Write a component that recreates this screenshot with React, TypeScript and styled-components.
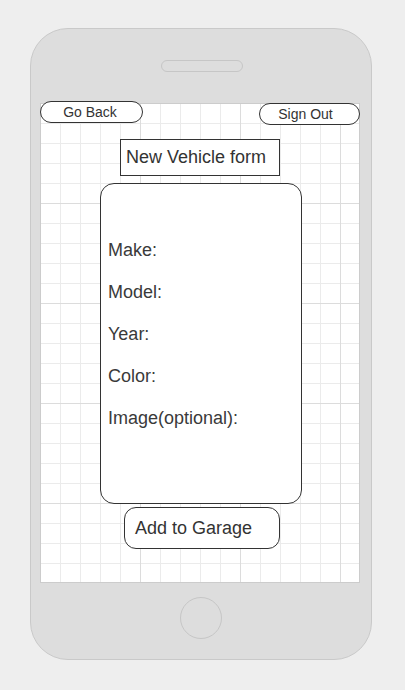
import styled, { createGlobalStyle } from 'styled-components';

const GlobalStyle = createGlobalStyle`
  html, body {
    margin: 0;
    padding: 0;
    background: #eeeeee;
  }
  body {
    min-height: 690px;
    padding: 28px 0 0 30px;
    box-sizing: border-box;
    font-family: "Liberation Sans", Arial, sans-serif;
    color: #333333;
  }
`;

const FIELDS = ['Make:', 'Model:', 'Year:', 'Color:', 'Image(optional):'];

function App() {
  return (
    <>
      <GlobalStyle />
      <Phone>
        <Speaker />
        <Screen>
          <TopBar>
            <PillButton $width={103} $shift={3} $offset={0}>
              Go Back
            </PillButton>
            <PillButton $width={101} $shift={8} $offset={2}>
              Sign Out
            </PillButton>
          </TopBar>
          <Title>New Vehicle form</Title>
          <FormCard>
            {FIELDS.map((label) => (
              <FieldLabel key={label}>{label}</FieldLabel>
            ))}
          </FormCard>
          <SubmitButton>Add to Garage</SubmitButton>
        </Screen>
        <HomeButton />
      </Phone>
    </>
  );
}

const Phone = styled.div`
  display: flex;
  flex-direction: column;
  align-items: center;
  box-sizing: border-box;
  width: 342px;
  height: 632px;
  padding-top: 31px;
  background: #dddddd;
  border: 1px solid #c9c9c9;
  border-radius: 38px;
`;

const Speaker = styled.div`
  width: 82px;
  height: 12px;
  margin-left: 2px;
  box-sizing: border-box;
  border: 1px solid #c6c6c6;
  border-radius: 6px;
`;

const Screen = styled.div`
  display: flex;
  flex-direction: column;
  align-items: center;
  box-sizing: border-box;
  width: 320px;
  height: 480px;
  margin: 31px 2px 0 0;
  border: 1px solid #cccccc;
  background-color: #ffffff;
  background-origin: border-box;
  background-image:
    linear-gradient(to right, #dcdcdc 1px, transparent 1px),
    linear-gradient(to bottom, #dcdcdc 1px, transparent 1px),
    linear-gradient(to right, #ebebeb 1px, transparent 1px),
    linear-gradient(to bottom, #ebebeb 1px, transparent 1px);
  background-size: 100px 100px, 100px 100px, 20px 20px, 20px 20px;
`;

const TopBar = styled.div`
  display: flex;
  justify-content: space-between;
  align-items: flex-start;
  align-self: stretch;
  margin: -3px -1px 0 -1px;
`;

const PillButton = styled.div<{ $width: number; $shift: number; $offset: number }>`
  box-sizing: border-box;
  width: ${({ $width }) => $width}px;
  height: 22px;
  margin-top: ${({ $offset }) => $offset}px;
  padding-right: ${({ $shift }) => $shift}px;
  border: 1px solid #333333;
  border-radius: 11px;
  background: #ffffff;
  font-size: 14px;
  line-height: 20px;
  text-align: center;
`;

const Title = styled.div`
  box-sizing: border-box;
  width: 160px;
  height: 37px;
  margin-top: 14px;
  padding-left: 5px;
  border: 1px solid #333333;
  background: #ffffff;
  font-size: 18px;
  line-height: 35px;
  white-space: nowrap;
`;

const FormCard = styled.div`
  display: flex;
  flex-direction: column;
  box-sizing: border-box;
  width: 202px;
  height: 321px;
  margin: 7px 0 0 2px;
  padding: 45px 0 0 7px;
  border: 1px solid #333333;
  border-radius: 14px;
  background: #ffffff;
`;

const FieldLabel = styled.span`
  font-size: 18px;
  line-height: 42px;
  color: #3a3a3a;
`;

const SubmitButton = styled.div`
  box-sizing: border-box;
  width: 156px;
  height: 42px;
  margin: 3px 0 0 4px;
  padding-left: 10px;
  border: 1px solid #333333;
  border-radius: 12px;
  background: #ffffff;
  font-size: 18px;
  line-height: 40px;
`;

const HomeButton = styled.div`
  width: 42px;
  height: 42px;
  margin-top: 14px;
  box-sizing: border-box;
  border: 1px solid #c6c6c6;
  border-radius: 50%;
`;

export default App;
